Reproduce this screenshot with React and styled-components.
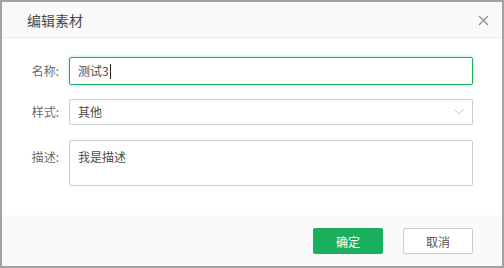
import React from 'react'
import styled, {createGlobalStyle} from 'styled-components'

const GlobalStyle = createGlobalStyle`
  html, body {
    margin: 0;
    padding: 0;
    background: #fff;
  }
  * {
    box-sizing: border-box;
  }
  body {
    font-family: "Noto Sans CJK SC", "Noto Sans", sans-serif;
    font-size: 12px;
  }
`

const Dialog = styled.div`
  width: 504px;
  height: 268px;
  border: 2px solid #a2a2a2;
  background: #fff;
  display: flex;
  flex-direction: column;
`

const Header = styled.div`
  height: 36px;
  flex-shrink: 0;
  background: #fafafa;
  border-bottom: 1px solid #e8e8e8;
  display: flex;
  align-items: center;
  justify-content: space-between;
  padding: 0 13px 0 25px;
`

const Title = styled.div`
  font-size: 14px;
  color: #4a4a4a;
  line-height: 1;
  padding-top: 1px;
`

const Close = styled.div`
  width: 12px;
  height: 12px;
  display: flex;
  align-items: center;
  justify-content: center;
  margin-top: 1px;
`

const Body = styled.div`
  flex: 1;
  display: flex;
  flex-direction: column;
  padding: 19px 29px 0 0;
`

const Row = styled.div`
  display: flex;
  align-items: ${p => (p.$top ? 'flex-start' : 'center')};
  margin-bottom: ${p => p.$gap || 0}px;
`

const Label = styled.div`
  width: 67px;
  padding-right: 10px;
  text-align: right;
  color: #6a6a6a;
  font-size: 12px;
  line-height: 1;
  padding-top: ${p => (p.$top ? '11px' : '0')};
`

const Field = styled.div`
  flex: 1;
  height: ${p => p.$h}px;
  border: 1px solid ${p => (p.$focus ? '#1fb063' : '#cccccc')};
  border-radius: 2px;
  box-shadow: ${p => (p.$focus ? '0 0 3px rgba(31, 176, 99, 0.45)' : 'none')};
  display: flex;
  align-items: ${p => (p.$top ? 'flex-start' : 'center')};
  justify-content: space-between;
  padding: ${p => (p.$top ? '10px 8px 0 8px' : '0 8px')};
  color: #4a4a4a;
  font-size: 12px;
  line-height: 1;
  background: #fff;
`

const Caret = styled.span`
  display: inline-block;
  width: 1px;
  height: 15px;
  background: #222;
  margin-left: 1px;
  vertical-align: middle;
`

const Value = styled.div`
  display: flex;
  align-items: center;
`

const Footer = styled.div`
  height: 51px;
  flex-shrink: 0;
  background: #fafafa;
  display: flex;
  justify-content: flex-end;
  align-items: flex-start;
  gap: 20px;
  padding: 13px 29px 0 0;
`

const Button = styled.div`
  width: 70px;
  height: 26px;
  border-radius: 2px;
  display: flex;
  align-items: center;
  justify-content: center;
  font-size: 12px;
  background: ${p => (p.$primary ? '#1aaf5d' : '#fff')};
  color: ${p => (p.$primary ? '#fff' : '#555')};
  border: 1px solid ${p => (p.$primary ? '#1aaf5d' : '#cccccc')};
`

export default function App() {
  return (
    <>
      <GlobalStyle />
      <Dialog>
        <Header>
          <Title>编辑素材</Title>
          <Close>
            <svg width="11" height="11" viewBox="0 0 11 11">
              <path d="M1 1L10 10M10 1L1 10" stroke="#8c8c8c" strokeWidth="1.1" fill="none" />
            </svg>
          </Close>
        </Header>
        <Body>
          <Row $gap={14}>
            <Label>名称:</Label>
            <Field $h={28} $focus>
              <Value>
                测试3<Caret />
              </Value>
            </Field>
          </Row>
          <Row $gap={15}>
            <Label>样式:</Label>
            <Field $h={26}>
              <Value>其他</Value>
              <svg width="10" height="6" viewBox="0 0 10 6">
                <path d="M0.5 0.5L5 5L9.5 0.5" stroke="#c8c8c8" strokeWidth="1" fill="none" />
              </svg>
            </Field>
          </Row>
          <Row $top>
            <Label $top>描述:</Label>
            <Field $h={46} $top>
              <Value>我是描述</Value>
            </Field>
          </Row>
        </Body>
        <Footer>
          <Button $primary>确定</Button>
          <Button>取消</Button>
        </Footer>
      </Dialog>
    </>
  )
}
